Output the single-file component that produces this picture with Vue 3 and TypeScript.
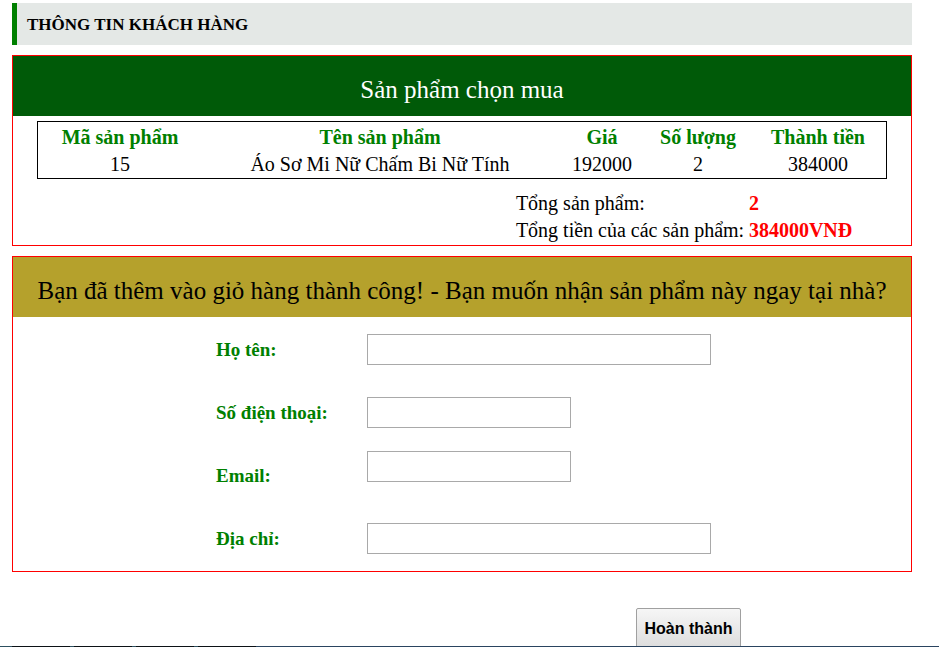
<script setup lang="ts">
import { reactive } from 'vue'

interface CartItem {
  id: number
  name: string
  price: number
  quantity: number
}

interface Field {
  key: 'name' | 'phone' | 'email' | 'address'
  label: string
  type: string
  wide: boolean
}

const items: CartItem[] = [
  { id: 15, name: 'Áo Sơ Mi Nữ Chấm Bi Nữ Tính', price: 192000, quantity: 2 },
]

const totalCount = items.reduce((sum, item) => sum + item.quantity, 0)
const totalPrice = items.reduce((sum, item) => sum + item.price * item.quantity, 0)

const fields: Field[] = [
  { key: 'name', label: 'Họ tên:', type: 'text', wide: true },
  { key: 'phone', label: 'Số điện thoại:', type: 'tel', wide: false },
  { key: 'email', label: 'Email:', type: 'email', wide: false },
  { key: 'address', label: 'Địa chỉ:', type: 'text', wide: true },
]

const customer = reactive({ name: '', phone: '', email: '', address: '' })
</script>

<template>
  <div class="page">
    <main class="content">
      <h1 class="heading">THÔNG TIN KHÁCH HÀNG</h1>

      <section class="panel">
        <h2 class="title title-cart">Sản phẩm chọn mua</h2>
        <table class="cart">
          <colgroup>
            <col class="col-id" />
            <col class="col-name" />
            <col class="col-price" />
            <col class="col-quantity" />
            <col class="col-total" />
          </colgroup>
          <thead>
            <tr>
              <th>Mã sản phẩm</th>
              <th>Tên sản phẩm</th>
              <th>Giá</th>
              <th>Số lượng</th>
              <th>Thành tiền</th>
            </tr>
          </thead>
          <tbody>
            <tr v-for="item in items" :key="item.id">
              <td>{{ item.id }}</td>
              <td>{{ item.name }}</td>
              <td>{{ item.price }}</td>
              <td>{{ item.quantity }}</td>
              <td>{{ item.price * item.quantity }}</td>
            </tr>
          </tbody>
        </table>
        <dl class="totals">
          <dt>Tổng sản phẩm:</dt>
          <dd>{{ totalCount }}</dd>
          <dt>Tổng tiền của các sản phẩm:</dt>
          <dd>{{ totalPrice }}VNĐ</dd>
        </dl>
      </section>

      <form id="customer-form" class="panel" @submit.prevent>
        <h2 class="title title-form">
          Bạn đã thêm vào giỏ hàng thành công! - Bạn muốn nhận sản phẩm này ngay tại nhà?
        </h2>
        <div class="fields">
          <div v-for="field in fields" :key="field.key" class="field" :class="'field-' + field.key">
            <label :for="field.key">{{ field.label }}</label>
            <input
              :id="field.key"
              v-model="customer[field.key]"
              :type="field.type"
              :class="{ wide: field.wide }"
            />
          </div>
        </div>
      </form>

      <div class="actions">
        <button type="submit" form="customer-form">Hoàn thành</button>
      </div>
    </main>
    <div class="strip"></div>
  </div>
</template>

<style>
body {
  background: #fff;
}
</style>

<style scoped>
.page {
  display: flex;
  flex-direction: column;
  height: 100vh;
  font-family: 'Liberation Serif', 'Times New Roman', serif;
  font-size: 20px;
  line-height: 27px;
  color: #000;
}

.content {
  flex: 1;
  min-height: 0;
  overflow: hidden;
  padding: 3px 27px 0 12px;
}

.heading {
  margin: 0 0 10px;
  padding: 2px 0 0 10px;
  border-left: 5px solid #008000;
  background: #e4e8e6;
  font-size: 17px;
  line-height: 40px;
}

.panel {
  margin-bottom: 10px;
  border: 1px solid #f00;
}

.title {
  margin: 0;
  padding-top: 8px;
  font-size: 25px;
  font-weight: normal;
  line-height: 52px;
  text-align: center;
}

.title-cart {
  background: #005a08;
  color: #fff;
}

.title-form {
  background: #b5a12c;
}

.cart {
  width: calc(100% - 48px);
  margin: 5px 24px 0;
  padding: 2px 0 0;
  border: 1px solid #000;
  border-spacing: 0;
  table-layout: fixed;
  text-align: center;
}

.cart th,
.cart td {
  padding: 0;
}

.cart th {
  color: #008000;
}

.col-id {
  width: 164px;
}

.col-name {
  width: 356px;
}

.col-price {
  width: 88px;
}

.col-quantity {
  width: 104px;
}

.col-total {
  width: 136px;
}

.totals {
  display: grid;
  grid-template-columns: 233px auto;
  margin: 11px 0 0 56%;
  padding-bottom: 1px;
}

.totals dd {
  margin: 0;
  color: #f00;
  font-weight: bold;
}

.fields {
  padding: 1px 0;
}

.field {
  display: grid;
  grid-template-columns: 151px 1fr;
  align-items: center;
  height: 63px;
  padding-left: 203px;
}

.field label {
  color: #008000;
  font-size: 19px;
  font-weight: bold;
}

.field input {
  box-sizing: border-box;
  width: 204px;
  height: 31px;
  padding: 2px 6px;
  border: 1px solid #a9a9a9;
  border-radius: 0;
  background: #fff;
  font: inherit;
}

.field input.wide {
  width: 344px;
}

.field-email input {
  align-self: start;
  margin-top: 7px;
}

.actions {
  display: flex;
  justify-content: flex-end;
  padding: 26px 171px 0 0;
}

.actions button {
  min-width: 105px;
  height: 42px;
  padding: 0 7px;
  border: 1px solid #a0a0a0;
  border-radius: 2px;
  background: linear-gradient(#f6f6f6, #dcdcdc);
  color: #000;
  font: bold 16px 'Liberation Sans', Arial, sans-serif;
}

.strip {
  flex: none;
  height: 1px;
  background: linear-gradient(
    90deg,
    #2d5060 12px,
    #0c1216 12px 70px,
    #2d5060 70px 74px,
    #0c1216 74px 132px,
    #2d5060 132px 136px,
    #0c1216 136px 194px,
    #2d5060 194px 198px,
    #0c1216 198px 256px,
    #2a4460 256px
  );
}
</style>
